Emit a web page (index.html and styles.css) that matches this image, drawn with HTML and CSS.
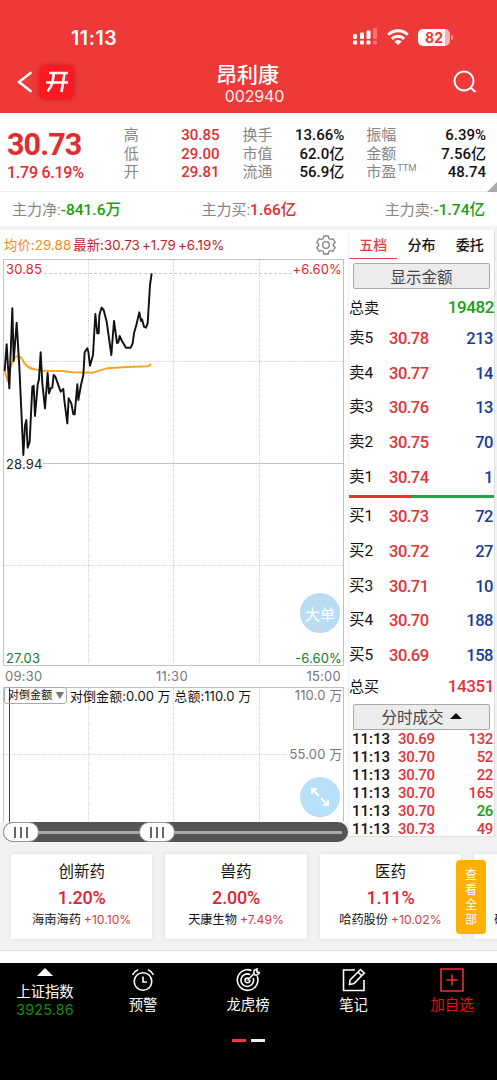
FILE: index.html
```html
<!doctype html>
<html lang="zh-CN">
	<head>
		<meta charset="utf-8">
		<title>昂利康 002940</title>
		<link rel="stylesheet" href="styles.css">
	</head>
	<body>
		<header class="header">
			<div class="status">
				<div class="clock">11:13</div>
				<div class="status-icons">
					<svg class="signal" width="26" height="18" viewBox="0 0 26 18" fill="#fff">
						<rect x="1" y="6" width="4" height="5" rx="1"/><rect x="8" y="4.500" width="4" height="6.500" rx="1"/><rect x="14.500" y="2.500" width="4" height="8.500" rx="1"/>
						<rect x="1" y="12.500" width="4" height="4" rx="1"/><rect x="8" y="12.500" width="4" height="4" rx="1"/><rect x="14.500" y="12.500" width="4" height="4" rx="1"/>
						<g opacity=".3"><rect x="21" y="0" width="4" height="11" rx="1"/><rect x="21" y="12.500" width="4" height="4" rx="1"/></g>
					</svg>
					<svg class="wifi" width="22" height="18" viewBox="0 0 22 18" fill="none" stroke="#fff" stroke-width="3">
						<path d="M1.200 6.800a14 14 0 0 1 19.600 0M4.800 10.800a9 9 0 0 1 12.400 0"/>
						<path d="M7.300 13.500a5.300 5.300 0 0 1 7.400 0L11 17z" fill="#fff" stroke="none"/>
					</svg>
					<div class="battery">82</div>
				</div>
			</div>
			<div class="titlebar">
				<svg width="16" height="22" viewBox="0 0 16 22" fill="none" stroke="#fff" stroke-width="2.600" stroke-linecap="round"><path d="M13.500 2L2 11l11.500 9"/></svg>
				<div class="logo">
					<svg width="24" height="22" viewBox="0 0 24 22" fill="none" stroke="#fff" stroke-width="2.600"><path d="M4 2h19M1 11.500h22M9 2L7.500 11Q6.500 16 2.500 20.500M19.500 2l-3 19"/></svg>
				</div>
				<div class="stock">
					<div class="name">昂利康</div>
					<div class="code">002940</div>
				</div>
				<svg class="search" width="24" height="24" viewBox="0 0 24 24" fill="none" stroke="#fff" stroke-width="2"><circle cx="11" cy="11" r="9.500"/><path d="M18 18l4.500 4"/></svg>
			</div>
		</header>

		<section class="quote">
			<div class="last">
				<div class="price">30.73</div>
				<div class="change">1.79 6.19%</div>
			</div>
			<dl class="facts facts-price">
				<dt>高</dt><dd class="red">30.85</dd>
				<dt>低</dt><dd class="red">29.00</dd>
				<dt>开</dt><dd class="red">29.81</dd>
			</dl>
			<dl class="facts facts-size">
				<dt>换手</dt><dd>13.66%</dd>
				<dt>市值</dt><dd>62.0亿</dd>
				<dt>流通</dt><dd>56.9亿</dd>
			</dl>
			<dl class="facts facts-trade">
				<dt>振幅</dt><dd>6.39%</dd>
				<dt>金额</dt><dd>7.56亿</dd>
				<dt>市盈<sup>TTM</sup></dt><dd>48.74</dd>
			</dl>
			<i class="corner"></i>
		</section>

		<section class="flow">
			<div>主力净:<b class="green">-841.6万</b></div>
			<div class="flow-buy">主力买:<b class="red">1.66亿</b></div>
			<div>主力卖:<b class="green">-1.74亿</b></div>
		</section>

		<main class="main">
			<div class="charts">
				<div class="legend">
					<span class="avg">均价:29.88</span>
					<span class="now">最新:30.73</span>
					<span class="diff">+1.79</span>
					<span class="diff">+6.19%</span>
					<svg class="gear" width="20" height="20" viewBox="0 0 20 20" fill="none" stroke="#808080" stroke-width="1.300" stroke-linejoin="round">
						<path d="M7.800 1h4.400l.6 2.500 1.700 1 2.500-.8 2.200 3.900-1.900 1.700v1.400l1.900 1.700-2.200 3.900-2.500-.8-1.700 1-.6 2.500H7.800l-.6-2.500-1.700-1-2.500.8-2.200-3.900 1.900-1.700V9.300L.8 7.600 3 3.700l2.500.8 1.700-1z"/>
						<circle cx="10" cy="10" r="3.300"/>
					</svg>
				</div>
				<div class="pane">
					<svg class="price-chart" width="348" height="408" viewBox="0 0 348 408">
						<rect class="frame" x="3.500" y="1.500" width="340" height="406"/>
						<path class="grid" d="M88.500 2v405M173.500 2v405M259.500 2v405M4 103.500h339M4 307.500h339"/>
						<path class="high" d="M44 15.500h248"/>
						<path class="frame" d="M43 205.500h300"/>
						<g transform="translate(0 -3) scale(.33333)">
							<path class="avg-line" d="M14 348l9 31 5-30 12-35q12-18 24-5 16 33 40 34l24 4 60 1 30 4 60 1q18-6 43-13l60-4 62-2 11-7"/>
							<path class="price-line" d="M14 348L20 268 28 400 37 160 41 318 50 203 58 335 70 600 75 512 79 495 83 578 89 560 97 395 101 392 105 483 113 390 117 372 122 292 127 385 135 460 143 354 147 415 152 400 157 397 161 360 166 365 182 410 190 402 193 436 202 505 206 430 214 445 220 478 224 478 232 388 235 435 243 390 250 360 254 292 262 280 265 290 270 332 279 300 286 177 292 235 296 235 298 180 305 158 311 165 320 200 334 300 342 198 351 264 355 262 359 243 366 258 378 278 392 278 398 265 402 235 409 210 418 172 423 198 426 193 432 215 438 218 443 205 450 90 455 55"/>
						</g>
						<text class="label red-text" x="6" y="15.500">30.85</text>
						<text class="label red-text end" x="342" y="15.500">+6.60%</text>
						<text class="label" x="6" y="210.500">28.94</text>
						<text class="label green-text" x="6" y="405">27.03</text>
						<text class="label green-text end" x="342" y="405">-6.60%</text>
					</svg>
					<div class="bubble bubble-order">大单</div>
				</div>
				<div class="times"><span>09:30</span><span>11:30</span><span>15:00</span></div>
				<div class="pane">
					<svg class="volume-chart" width="348" height="136" viewBox="0 0 348 136">
						<rect class="frame" x="3.500" y="1.500" width="340" height="135"/>
						<path class="grid" d="M88.500 2v134M173.500 2v134M259.500 2v134M4 68.500h286"/>
						<path class="cursor" d="M9.500 2v134"/>
						<text class="label grey-text end" x="342.500" y="14">110.0 万</text>
						<text class="label grey-text end" x="342.500" y="73">55.00 万</text>
					</svg>
					<div class="indicator">
						<span class="select">对倒金额<i>▼</i></span>
						<span>对倒金额:0.00 万 总额:110.0 万</span>
					</div>
					<div class="bubble bubble-expand">
						<svg width="22" height="22" viewBox="0 0 22 22" fill="none" stroke="#fff" stroke-width="2"><path d="M8 3H3v5M3 3l7 7M19 14v5h-5M19 19l-7-7"/></svg>
					</div>
				</div>
				<div class="slider">
					<div class="knob"><i></i><i></i><i></i></div>
					<div class="rail"></div>
					<div class="knob"><i></i><i></i><i></i></div>
					<div class="rail rail-end"></div>
				</div>
			</div>

			<aside class="book">
				<div class="tabs"><span class="active">五档</span><span>分布</span><span>委托</span></div>
				<div class="button">显示金额</div>
				<div class="total"><span>总卖</span><b class="green">19482</b></div>
				<div class="levels">
					<div><span>卖5</span><em>30.78</em><b>213</b></div>
					<div><span>卖4</span><em>30.77</em><b>14</b></div>
					<div><span>卖3</span><em>30.76</em><b>13</b></div>
					<div><span>卖2</span><em>30.75</em><b>70</b></div>
					<div><span>卖1</span><em>30.74</em><b>1</b></div>
				</div>
				<div class="ratio"></div>
				<div class="levels">
					<div><span>买1</span><em>30.73</em><b>72</b></div>
					<div><span>买2</span><em>30.72</em><b>27</b></div>
					<div><span>买3</span><em>30.71</em><b>10</b></div>
					<div><span>买4</span><em>30.70</em><b>188</b></div>
					<div><span>买5</span><em>30.69</em><b>158</b></div>
				</div>
				<div class="total total-buy"><span>总买</span><b>14351</b></div>
				<div class="button button-deals">分时成交<i class="up"></i></div>
				<div class="trades">
					<div><span>11:13</span><em>30.69</em><b>132</b></div>
					<div><span>11:13</span><em>30.70</em><b>52</b></div>
					<div><span>11:13</span><em>30.70</em><b>22</b></div>
					<div><span>11:13</span><em>30.70</em><b>165</b></div>
					<div><span>11:13</span><em>30.70</em><b class="green">26</b></div>
					<div><span>11:13</span><em>30.73</em><b>49</b></div>
				</div>
			</aside>
		</main>

		<section class="sectors">
			<div class="card"><h3>创新药</h3><strong>1.20%</strong><p>海南海药<em>+10.10%</em></p></div>
			<div class="card"><h3>兽药</h3><strong>2.00%</strong><p>天康生物<em>+7.49%</em></p></div>
			<div class="card"><h3>医药</h3><strong>1.11%</strong><p>哈药股份<em>+10.02%</em></p></div>
			<div class="card card-cut"><p>硕</p></div>
			<div class="all">查看全部</div>
		</section>

		<footer class="footer">
			<nav class="nav">
				<div class="index">
					<i class="up"></i>
					<span>上证指数</span>
					<span class="points">3925.86</span>
				</div>
				<div>
					<svg width="24" height="24" viewBox="0 0 24 24" fill="none" stroke="#fff" stroke-width="1.600"><circle cx="12" cy="13.500" r="8.800"/><path d="M12 8.500v5.500h4M1.500 7Q3 3.500 7 1.800M22.500 7Q21 3.500 17 1.800"/></svg>
					<span>预警</span>
				</div>
				<div>
					<svg width="24" height="24" viewBox="0 0 24 24" fill="none" stroke="#fff" stroke-width="1.600"><path d="M15.500 2.500a10.300 10.300 0 1 0 5.700 5.800M14.200 6.600a6.300 6.300 0 1 0 3 3.500M12.500 10.200a2.400 2.400 0 1 0 1.300 1.700M11.500 12.500l6.500-7V2.500L21 1v3l2.500.5-2.500 2.500h-3"/></svg>
					<span>龙虎榜</span>
				</div>
				<div>
					<svg width="24" height="24" viewBox="0 0 24 24" fill="none" stroke="#fff" stroke-width="1.600"><path d="M13 2H1.500v20.500H22V12M8 12L18.500 1.500l3.800 3.600L12 15.500l-4.500 1zM16 4l3.700 3.700"/></svg>
					<span>笔记</span>
				</div>
				<div class="add">
					<svg width="24" height="24" viewBox="0 0 24 24" fill="none" stroke="#f33038" stroke-width="1.500"><path d="M1 1h22v22H1zM6.500 12h11M12 6.500v11"/></svg>
					<span>加自选</span>
				</div>
			</nav>
			<div class="pager"><i class="on"></i><i></i></div>
		</footer>
	</body>
</html>
```
FILE: styles.css
```css
* {
	box-sizing: border-box;
}
body {
	margin: 0;
	width: 497px;
	height: 1080px;
	overflow: hidden;
	background: #f2f2f2;
	color: #111;
	font-family: Roboto, "Noto Sans CJK SC", sans-serif;
	font-size: 15px;
}
em, i {
	font-style: normal;
}
b {
	font-weight: 500;
}
.red {
	color: #e12c32;
}
.green, .book .green {
	color: #16a010;
}

/* header */
.header {
	height: 113px;
	background: #ef3838;
	color: #fff;
}
.status {
	display: flex;
	justify-content: space-between;
	align-items: center;
	height: 60px;
	padding: 14px 47px 0 71px;
}
.clock {
	font: 600 19.5px/24px Inter, sans-serif;
	letter-spacing: .6px;
	padding-top: 2px;
}
.status-icons {
	display: flex;
	align-items: center;
	gap: 9px;
}
.battery {
	position: relative;
	width: 32px;
	height: 17px;
	border-radius: 5px;
	background: linear-gradient(90deg, #fff 27px, #f9b0b0 27px);
	color: #ef3838;
	font: 700 14px/17px Inter, sans-serif;
	text-align: center;
}
.battery::after {
	content: "";
	position: absolute;
	left: 33px;
	top: 6px;
	width: 2px;
	height: 5px;
	border-radius: 0 2px 2px 0;
	background: #f9a0a0;
}
.titlebar {
	display: flex;
	align-items: center;
	height: 44px;
	padding: 0 20px 0 17px;
}
.logo {
	display: flex;
	align-items: center;
	justify-content: center;
	width: 34px;
	height: 34px;
	margin-left: 7px;
	border-radius: 6px;
	background: #fe1820;
	box-shadow: 0 0 4px #b52020;
}
.stock {
	width: 80px;
	margin-left: 139px;
	padding-top: 5px;
	text-align: center;
	white-space: nowrap;
}
.name {
	font-size: 21px;
	font-weight: 500;
	line-height: 23px;
	margin-left: -11px;
}
.code {
	font: 16px/18px Inter, sans-serif;
	padding-left: 3px;
	opacity: .92;
	letter-spacing: -.1px;
}
.search {
	margin-left: auto;
}

/* quote */
.quote {
	position: relative;
	display: flex;
	height: 79px;
	padding: 13px 11px 0 7px;
	background: #fff;
	border-bottom: 1px solid #eee;
}
.last {
	width: 117px;
	color: #e12c32;
	white-space: nowrap;
}
.price {
	padding-top: 1px;
	font-size: 30.5px;
	font-weight: 700;
	line-height: 35px;
	letter-spacing: -.9px;
}
.change {
	padding-top: 1px;
	font-size: 16px;
	font-weight: 500;
	line-height: 20px;
	letter-spacing: -.25px;
}
.facts {
	display: grid;
	grid-template-columns: auto 1fr;
	grid-auto-rows: 18.7px;
	margin: 0;
	line-height: 18px;
	white-space: nowrap;
}
.facts dt {
	color: #858585;
}
.facts dd {
	margin: 0;
	text-align: right;
	font-weight: 500;
}
.facts-price {
	width: 96px;
}
.facts-size {
	width: 102px;
	margin-left: 23px;
}
.facts-trade {
	width: 120px;
	margin-left: 22px;
}
.facts sup {
	font-size: 9.5px;
	line-height: 1;
	vertical-align: 6px;
	margin-left: 1px;
	letter-spacing: -.2px;
}
.corner {
	position: absolute;
	right: 0;
	bottom: -1px;
	border: solid transparent;
	border-width: 10px 0 0 10px;
	border-bottom: 10px solid #aaa;
	border-top: 0;
}
.flow {
	display: flex;
	justify-content: space-between;
	height: 34px;
	padding: 0 12px;
	background: #fff;
	color: #858585;
	font-size: 15px;
	line-height: 36px;
}
.flow b {
	font-size: 15.5px;
}
.flow-buy {
	margin-right: 8px;
}

/* main area */
.main {
	display: flex;
	height: 618px;
	padding-top: 4px;
}
.charts {
	width: 348px;
	height: 613px;
}
.legend {
	display: flex;
	align-items: center;
	height: 28px;
	padding: 2px 12px 0 4px;
	background: #fff;
	font: 13.3px/20px Inter, "Noto Sans CJK SC", sans-serif;
	letter-spacing: .1px;
	color: #bd1c27;
	white-space: nowrap;
}
.avg {
	color: #f08c1e;
}
.now {
	margin-left: 2px;
}
.diff {
	margin-left: 2px;
}
.gear {
	margin-left: auto;
}
.pane {
	position: relative;
	background: #fff;
}
.pane > svg {
	display: block;
}
.frame {
	fill: none;
	stroke: #c2c2c2;
}
.grid {
	stroke: #c2c2c2;
	stroke-dasharray: 1 1.500;
}
.high {
	stroke: #d5c6bc;
	stroke-dasharray: 3 2;
}
.price-line, .avg-line {
	fill: none;
	stroke: #111;
	stroke-width: 5.8;
	stroke-linejoin: round;
}
.avg-line {
	stroke: #f5a623;
}
.cursor {
	stroke: #333d70;
}
.label {
	font: 13px Inter, "Noto Sans CJK SC", sans-serif;
	letter-spacing: .15px;
	fill: #222;
}
.end {
	text-anchor: end;
}
.red-text {
	fill: #dc1f32;
}
.green-text {
	fill: #147a1b;
}
.grey-text {
	fill: #777;
}
.times {
	display: flex;
	justify-content: space-between;
	height: 20px;
	padding: 1px 7px 0 5px;
	background: #fff;
	color: #777;
	font: 13px/18px Inter, sans-serif;
	letter-spacing: .25px;
}
.times span:nth-child(2) {
	margin-right: 5px;
}
.bubble {
	position: absolute;
	right: 8px;
	display: flex;
	align-items: center;
	justify-content: center;
	width: 40px;
	height: 40px;
	border-radius: 50%;
	background: #b9e0fb;
	color: #fff;
	font-size: 15px;
}
.bubble-order {
	top: 335px;
	background: #b9dcf3;
}
.bubble-expand {
	top: 91px;
}
.indicator {
	position: absolute;
	left: 4px;
	top: 1px;
	display: flex;
	align-items: center;
	gap: 3px;
	font: 13px/16px Inter, "Noto Sans CJK SC", sans-serif;
	letter-spacing: .05px;
	white-space: nowrap;
}
.select {
	width: 63px;
	padding-left: 3px;
	border: 1px solid #aaa;
	border-radius: 3px;
	font-size: 11px;
	line-height: 14px;
}
.select i {
	margin-left: 3px;
	font-size: 9px;
	color: #777;
}
.slider {
	display: flex;
	align-items: center;
	height: 20px;
	margin-left: 3px;
	border-radius: 10px;
	background: #545454;
}
.knob {
	display: flex;
	align-items: center;
	justify-content: center;
	gap: 4px;
	width: 36px;
	height: 20px;
	border: 1px solid #999;
	border-radius: 10px;
	background: #fff;
}
.knob i {
	width: 2px;
	height: 11px;
	background: #666;
}
.rail {
	width: 100px;
	height: 3px;
	background: #aaa;
}
.rail-end {
	width: 167px;
}

/* order book */
.book {
	width: 146px;
	height: 607px;
	margin-left: 1px;
	padding-top: 1px;
	background: #fff;
	border-right: 1px solid #ddd;
	border-bottom: 1px solid #ddd;
}
.tabs {
	display: flex;
	height: 28px;
	font-size: 14px;
	line-height: 29px;
	font-weight: 500;
	text-align: center;
}
.tabs span {
	flex: 1;
}
.tabs .active {
	color: #ee3c3c;
	border-bottom: 1px solid #ee3c3c;
}
.button {
	display: flex;
	align-items: center;
	justify-content: center;
	height: 26px;
	margin: 4px 4px 0;
	padding-bottom: 1px;
	border: 1px solid #aaa;
	border-radius: 2px;
	background: #ececec;
	color: #444;
	font-size: 15.5px;
}
.button-deals {
	margin-top: 3px;
}
.up {
	margin-left: 6px;
	border: 6px solid transparent;
	border-top: 0;
	border-bottom: 6px solid #111;
}
.total, .levels div, .trades div {
	display: flex;
	align-items: center;
}
.total {
	justify-content: space-between;
	height: 32px;
	padding-top: 3px;
	font-size: 15px;
}
.total b {
	color: #e0343a;
	font-size: 17px;
	letter-spacing: -.4px;
}
.total-buy {
	height: 28px;
	padding: 0 0 2px;
}
.levels div {
	height: 34.7px;
	padding-right: 1px;
	font-size: 16.5px;
}
.levels span {
	width: 40px;
	font-size: 15.5px;
	line-height: 20px;
	padding-bottom: 1px;
}
.levels em {
	color: #e0343a;
	font-weight: 500;
	letter-spacing: -.5px;
}
.levels b {
	margin-left: auto;
	color: #173c94;
	letter-spacing: -.5px;
}
.ratio {
	height: 3px;
	margin: 1px 0;
	background: linear-gradient(90deg, #df3636 62px, #22a544 62px);
}
.trades {
	padding: 0 1px 0 3px;
	font-size: 15px;
	font-weight: 500;
}
.trades div {
	height: 18px;
}
.trades span {
	width: 46px;
}
.trades em {
	color: #e0343a;
	letter-spacing: -.3px;
}
.trades b {
	margin-left: auto;
	color: #e0343a;
	letter-spacing: -.4px;
}

/* sectors */
.sectors {
	position: relative;
	display: flex;
	gap: 13px;
	height: 107px;
	padding: 10px 0 0 11px;
	border-bottom: 1px solid #ddd;
	overflow: hidden;
}
.card {
	flex: 0 0 141.4px;
	height: 85px;
	padding-top: 6px;
	background: #fff;
	box-shadow: 0 0 4px #ddd;
	text-align: center;
	white-space: nowrap;
}
.card h3 {
	margin: 0;
	font-size: 15.5px;
	font-weight: 400;
	line-height: 24px;
}
.card strong {
	display: block;
	color: #df2530;
	font-size: 18px;
	font-weight: 500;
	line-height: 27px;
	letter-spacing: -.2px;
}
.card p {
	margin: 0;
	font: 12.2px/18px Inter, "Noto Sans CJK SC", sans-serif;
}
.card em {
	margin-left: 3px;
	color: #d83a45;
}
.card-cut {
	padding: 57px 0 0 20px;
	text-align: left;
}
.all {
	position: absolute;
	left: 456px;
	top: 16px;
	width: 30px;
	height: 74px;
	padding: 8px 9px;
	border-radius: 4px;
	background: #ffb000;
	color: #fff;
	font-size: 12px;
	line-height: 15px;
}

/* bottom bar */
.footer {
	height: 130px;
	border-top: 12px solid #fff;
	background: #000;
	color: #fff;
}
.nav {
	display: grid;
	grid-template-columns: 90px 106px 104px 107px 90px;
	height: 76px;
	padding-top: 5px;
}
.nav div {
	display: flex;
	flex-direction: column;
	align-items: center;
	font-size: 14.3px;
	line-height: 20px;
}
.nav svg {
	margin-bottom: 3px;
}
.nav .up {
	margin: 0 0 7px;
	border-width: 0 8px 8px;
	border-bottom-color: #fff;
}
.nav .index {
	line-height: 18px;
}
.points {
	color: #168c12;
	font-family: Inter, sans-serif;
	letter-spacing: .2px;
}
.add {
	color: #e80d12;
}
.pager {
	display: flex;
	justify-content: center;
	gap: 5px;
}
.pager i {
	width: 14px;
	height: 3px;
	background: #eee;
}
.pager .on {
	background: #f03838;
}
```
